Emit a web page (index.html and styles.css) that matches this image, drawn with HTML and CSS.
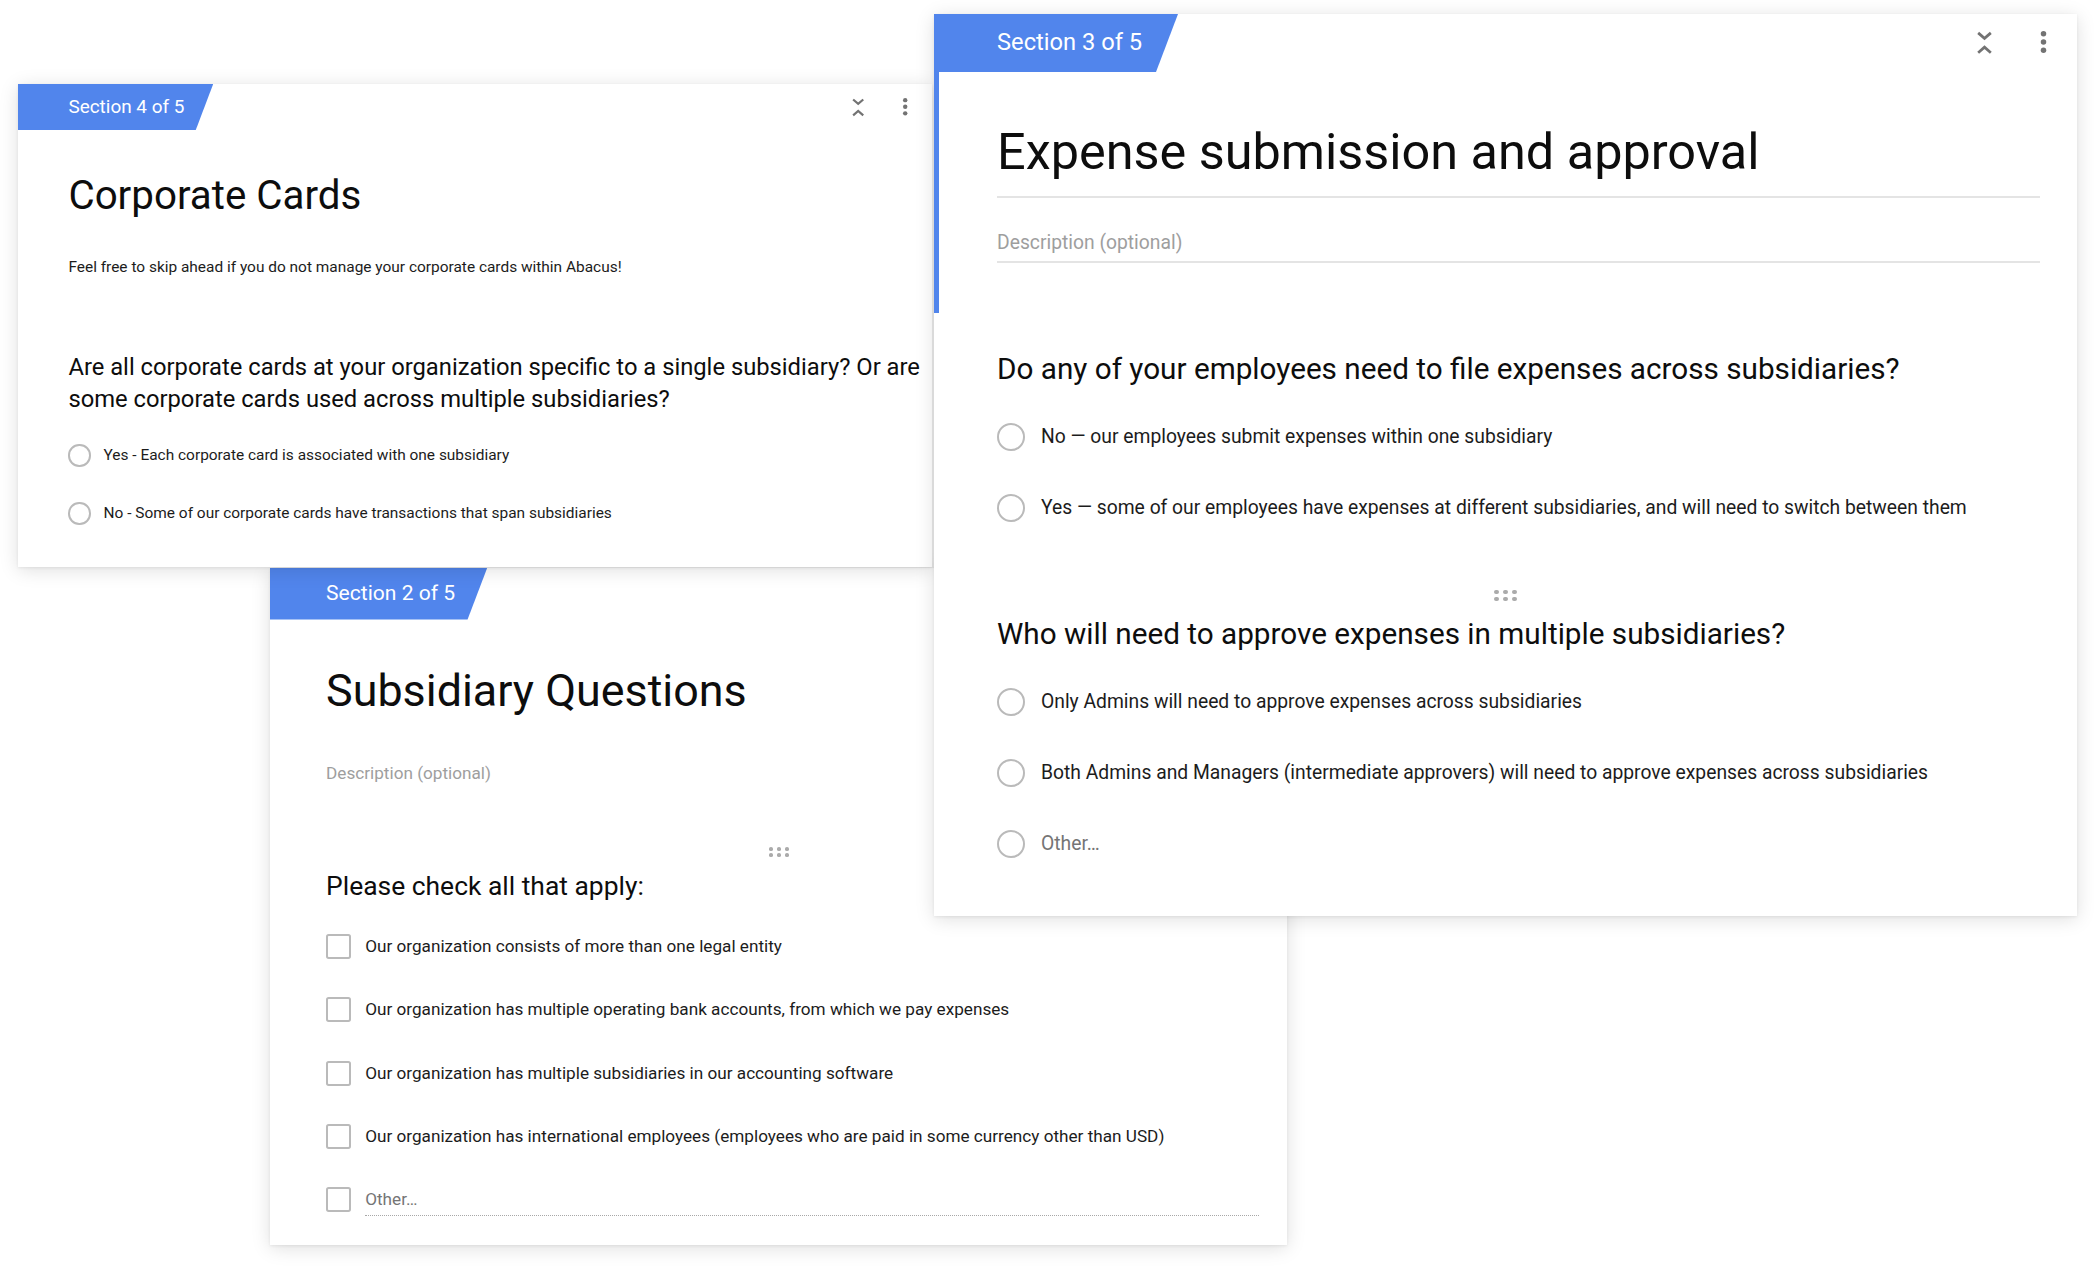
FILE: index.html
```html
<!DOCTYPE html>
<html lang="en">
<head>
<meta charset="utf-8">
<title>Form sections</title>
<link rel="stylesheet" href="styles.css">
</head>
<body>
<main class="canvas">

  <section class="card card--subsidiary">
    <header class="card-top">
      <div class="tab"><span class="tab-label">Section 2 of 5</span></div>
      <div class="tools">
        <svg class="tool tool--collapse" viewBox="0 0 24 24"><path d="M7.4 5 L12 9 L16.6 5 M7.4 19.4 L12 15.4 L16.6 19.4"/></svg>
        <svg class="tool tool--more" viewBox="0 0 24 24"><circle cx="12" cy="5.6" r="2"/><circle cx="12" cy="11.6" r="2"/><circle cx="12" cy="17.6" r="2"/></svg>
      </div>
    </header>
    <div class="head">
      <div class="field field--title"><h1 class="title">Subsidiary Questions</h1></div>
      <div class="field field--desc"><p class="desc desc--placeholder">Description (optional)</p></div>
    </div>
    <div class="q">
      <div class="handle"><i></i><i></i><i></i><i></i><i></i><i></i></div>
      <h2 class="q-title">Please check all that apply:</h2>
      <ul class="opts">
        <li class="opt"><span class="check"></span><span class="opt-text">Our organization consists of more than one legal entity</span></li>
        <li class="opt"><span class="check"></span><span class="opt-text">Our organization has multiple operating bank accounts, from which we pay expenses</span></li>
        <li class="opt"><span class="check"></span><span class="opt-text">Our organization has multiple subsidiaries in our accounting software</span></li>
        <li class="opt"><span class="check"></span><span class="opt-text">Our organization has international employees (employees who are paid in some currency other than USD)</span></li>
        <li class="opt opt--field"><span class="check"></span><span class="opt-field"><span class="opt-text opt-text--other">Other…</span></span></li>
      </ul>
    </div>
  </section>

  <section class="card card--cards">
    <header class="card-top">
      <div class="tab"><span class="tab-label">Section 4 of 5</span></div>
      <div class="tools">
        <svg class="tool tool--collapse" viewBox="0 0 24 24"><path d="M7.4 5 L12 9 L16.6 5 M7.4 19.4 L12 15.4 L16.6 19.4"/></svg>
        <svg class="tool tool--more" viewBox="0 0 24 24"><circle cx="12" cy="5.6" r="2"/><circle cx="12" cy="11.6" r="2"/><circle cx="12" cy="17.6" r="2"/></svg>
      </div>
    </header>
    <div class="head">
      <div class="field field--title"><h1 class="title">Corporate Cards</h1></div>
      <div class="field field--desc"><p class="desc">Feel free to skip ahead if you do not manage your corporate cards within Abacus!</p></div>
    </div>
    <div class="q">
      <div class="handle handle--hidden"><i></i><i></i><i></i><i></i><i></i><i></i></div>
      <h2 class="q-title q-title--lines">Are all corporate cards at your organization specific to a single subsidiary? Or are<br>some corporate cards used across multiple subsidiaries?</h2>
      <ul class="opts">
        <li class="opt"><span class="radio"></span><span class="opt-text">Yes - Each corporate card is associated with one subsidiary</span></li>
        <li class="opt"><span class="radio"></span><span class="opt-text">No - Some of our corporate cards have transactions that span subsidiaries</span></li>
      </ul>
    </div>
  </section>

  <section class="card card--expense">
    <header class="card-top">
      <div class="tab"><span class="tab-label">Section 3 of 5</span></div>
      <div class="tools">
        <svg class="tool tool--collapse" viewBox="0 0 24 24"><path d="M7.4 5 L12 9 L16.6 5 M7.4 19.4 L12 15.4 L16.6 19.4"/></svg>
        <svg class="tool tool--more" viewBox="0 0 24 24"><circle cx="12" cy="5.6" r="2"/><circle cx="12" cy="11.6" r="2"/><circle cx="12" cy="17.6" r="2"/></svg>
      </div>
    </header>
    <div class="head head--active">
      <div class="field field--title"><h1 class="title">Expense submission and approval</h1></div>
      <div class="field field--desc"><p class="desc desc--placeholder">Description (optional)</p></div>
    </div>
    <div class="q">
      <div class="handle handle--hidden"><i></i><i></i><i></i><i></i><i></i><i></i></div>
      <h2 class="q-title">Do any of your employees need to file expenses across subsidiaries?</h2>
      <ul class="opts">
        <li class="opt"><span class="radio"></span><span class="opt-text">No — our employees submit expenses within one subsidiary</span></li>
        <li class="opt"><span class="radio"></span><span class="opt-text">Yes — some of our employees have expenses at different subsidiaries, and will need to switch between them</span></li>
      </ul>
    </div>
    <div class="q q--next">
      <div class="handle"><i></i><i></i><i></i><i></i><i></i><i></i></div>
      <h2 class="q-title">Who will need to approve expenses in multiple subsidiaries?</h2>
      <ul class="opts">
        <li class="opt"><span class="radio"></span><span class="opt-text">Only Admins will need to approve expenses across subsidiaries</span></li>
        <li class="opt"><span class="radio"></span><span class="opt-text">Both Admins and Managers (intermediate approvers) will need to approve expenses across subsidiaries</span></li>
        <li class="opt"><span class="radio"></span><span class="opt-text opt-text--other">Other…</span></li>
      </ul>
    </div>
  </section>

</main>
</body>
</html>
```

FILE: styles.css
```css
* { box-sizing: border-box; }

html, body {
  margin: 0;
  padding: 0;
  background: #fff;
}

body {
  font-family: Roboto, "Noto Sans", "Liberation Sans", Arial, sans-serif;
  color: #1c1c1c;
}

.canvas {
  position: relative;
  width: 2094px;
  height: 1268px;
  overflow: hidden;
  background: #fff;
}

/* Each card is the same form section, pasted at a different scale:
   all inner sizes are in em of the card's font-size (10px = 1:1). */
.card {
  position: absolute;
  width: 114.3em;
  background: #fff;
  padding-bottom: 5.8em;
  box-shadow: 0 1px 3px rgba(0, 0, 0, 0.07), 0 3px 18px rgba(0, 0, 0, 0.13);
}

.card--expense {
  left: 934px;
  top: 14px;
  font-size: 10px;
  z-index: 3;
}

.card--cards {
  left: 18px;
  top: 84px;
  font-size: 8px;
  z-index: 2;
  padding-bottom: 5.3em;
}

.card--subsidiary {
  left: 270px;
  top: 568px;
  font-size: 8.9px;
  z-index: 1;
  padding-bottom: 3.27em;
}

/* top row: section tab + tools */
.card-top {
  display: flex;
  justify-content: space-between;
  align-items: flex-start;
  height: 5.8em;
}

.tab {
  width: 24.4em;
  height: 5.8em;
  background: #5185ec;
  clip-path: polygon(0 0, 100% 0, calc(100% - 2.2em) 100%, 0 100%);
  display: flex;
  align-items: center;
  padding: 0 0 0.2em 6.3em;
}

.tab-label {
  font-size: 2.37em;
  color: #fff;
  white-space: nowrap;
}

.tools {
  display: flex;
  gap: 2.65em;
  padding: 1.2em 1.7em 0 0;
}

.tool {
  display: block;
  width: 3.3em;
  height: 3.3em;
}

.tool--collapse path {
  fill: none;
  stroke: #737373;
  stroke-width: 2;
}

.tool--more circle {
  fill: #737373;
}

/* section header */
.head {
  padding: 4.84em 3.7em 5em 6.3em;
}

.card--cards .head {
  padding-top: 4.97em;
}

.head--active {
  border-left: 0.5em solid #5185ec;
  padding-left: 5.8em;
}

.field {
  border-bottom: 0.2em solid transparent;
}

.head--active .field {
  border-bottom-color: #e4e4e4;
}

.field--title {
  padding-bottom: 1.15em;
}

.field--desc {
  margin-top: 3.3em;
  padding-bottom: 0.55em;
}

.card--subsidiary .field--desc {
  margin-top: 3.6em;
}

.title {
  margin: 0;
  font-size: 5.04em;
  font-weight: 400;
  line-height: 1.27;
  color: #0d0d0d;
  white-space: nowrap;
}

.desc {
  margin: 0;
  font-size: 1.93em;
  line-height: 1.27;
  color: #1c1c1c;
  white-space: nowrap;
}

.desc--placeholder {
  color: #9e9e9e;
}

/* questions */
.q {
  padding: 0 1em 0 6.3em;
  margin-top: 1.2em;
}

.card--subsidiary .q {
  margin-top: 1.35em;
}

.q--next {
  margin-top: 6.8em;
}

.handle {
  display: grid;
  grid-template-columns: repeat(3, 0.42em);
  column-gap: 0.48em;
  row-gap: 0.28em;
  justify-content: center;
  height: 1.1em;
  margin: 0 -1em 1.27em -6.3em;
}

.handle i {
  width: 0.42em;
  height: 0.42em;
  border-radius: 50%;
  background: #ababab;
}

.handle--hidden {
  visibility: hidden;
}

.q-title {
  margin: 0;
  font-size: 2.97em;
  font-weight: 400;
  line-height: 1.347;
  color: #0d0d0d;
}

.q-title--lines {
  white-space: nowrap;
}

.opts {
  list-style: none;
  margin: 3.43em 0 0;
  padding: 0;
  display: flex;
  flex-direction: column;
  gap: 4.3em;
}

.card--cards .opts {
  margin-top: 3.6em;
  gap: 4.45em;
}

.opt {
  display: flex;
  align-items: center;
  gap: 1.6em;
  height: 2.8em;
}

.opt--field {
  align-items: flex-start;
  height: 3.3em;
}

.radio,
.check {
  flex: none;
  width: 2.8em;
  height: 2.8em;
  border: 0.25em solid #bababa;
}

.radio {
  border-radius: 50%;
}

.check {
  border-radius: 0.3em;
}

.opt-text {
  font-size: 1.93em;
  line-height: 1.45;
  white-space: nowrap;
  color: #1c1c1c;
}

.opt-text--other {
  color: #757575;
}

.opt-field {
  flex: 1;
  height: 3.3em;
  margin-right: 2.2em;
  border-bottom: 0.14em dotted #a8a8a8;
}
```
